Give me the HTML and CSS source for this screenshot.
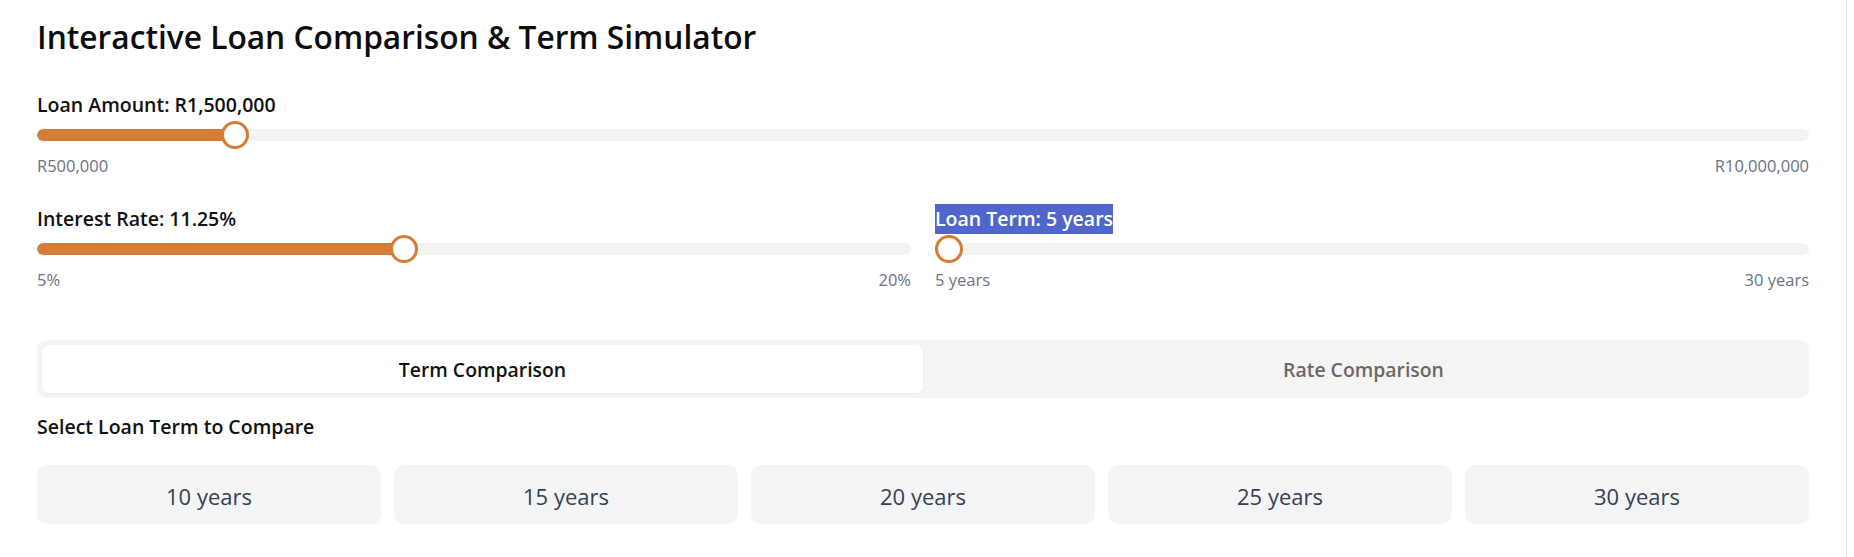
FILE: index.html
```html
<!DOCTYPE html>
<html lang="en">
<head>
<meta charset="utf-8">
<title>Interactive Loan Comparison &amp; Term Simulator</title>
<link rel="stylesheet" href="styles.css">
</head>
<body>
<div class="page">
  <h1 class="title">Interactive Loan Comparison &amp; Term Simulator</h1>

  <div class="group">
    <div class="label">Loan Amount: R1,500,000</div>
    <div class="slider" style="--p:0.10526">
      <div class="track"><div class="fill"></div></div>
      <div class="thumb"></div>
    </div>
    <div class="range-labels"><span>R500,000</span><span>R10,000,000</span></div>
  </div>

  <div class="row">
    <div class="group">
      <div class="label">Interest Rate: 11.25%</div>
      <div class="slider" style="--p:0.41667">
        <div class="track"><div class="fill"></div></div>
        <div class="thumb"></div>
      </div>
      <div class="range-labels"><span>5%</span><span>20%</span></div>
    </div>
    <div class="group">
      <div class="label"><span class="selected">Loan Term: 5 years</span></div>
      <div class="slider" style="--p:0">
        <div class="track"><div class="fill"></div></div>
        <div class="thumb"></div>
      </div>
      <div class="range-labels"><span>5 years</span><span>30 years</span></div>
    </div>
  </div>

  <div class="tabs">
    <div class="tab active">Term Comparison</div>
    <div class="tab">Rate Comparison</div>
  </div>

  <div class="label select-label">Select Loan Term to Compare</div>

  <div class="terms">
    <div class="term">10 years</div>
    <div class="term">15 years</div>
    <div class="term">20 years</div>
    <div class="term">25 years</div>
    <div class="term">30 years</div>
  </div>
</div>
</body>
</html>
```

FILE: styles.css
```css
* { box-sizing: border-box; }

html, body {
  margin: 0;
  padding: 0;
  background: #ffffff;
}

body {
  font-family: "Open Sans", "Noto Sans", "Liberation Sans", sans-serif;
  color: #111111;
}

.page {
  width: 1847px;
  min-height: 557px;
  padding: 17px 37px 0 37px;
  border-right: 1px solid #e4e4e4;
}

.title {
  margin: 0;
  font-size: 31.7px;
  line-height: 40px;
  font-weight: 600;
  color: #0d0d0d;
}

.group {
  display: flex;
  flex-direction: column;
}

.page > .group {
  margin-top: 33px;
}

.label {
  font-size: 19.5px;
  line-height: 30px;
  font-weight: 600;
  color: #111111;
}

.selected {
  display: inline-block;
  background: #5066cc;
  color: #ffffff;
}

.slider {
  position: relative;
  height: 30px;
  margin-top: 0;
  display: flex;
  align-items: center;
}

.track {
  width: 100%;
  height: 12px;
  border-radius: 6px;
  background: #f3f3f1;
  overflow: hidden;
}

.fill {
  height: 100%;
  width: calc(14px + var(--p) * (100% - 28px));
  background: #d57c39;
  border-radius: 6px 0 0 6px;
}

.thumb {
  position: absolute;
  top: 1px;
  left: calc(var(--p) * (100% - 28px));
  width: 28px;
  height: 28px;
  border-radius: 50%;
  background: #ffffff;
  border: 3px solid #d57c39;
}

.range-labels {
  margin-top: 6px;
  display: flex;
  justify-content: space-between;
  font-size: 16.5px;
  line-height: 20px;
  color: #6b7280;
}

.row {
  margin-top: 28px;
  display: grid;
  grid-template-columns: 1fr 1fr;
  column-gap: 24px;
}

.tabs {
  margin-top: 50px;
  display: grid;
  grid-template-columns: 1fr 1fr;
  padding: 5px;
  height: 58px;
  background: #f4f4f2;
  border-radius: 10px;
}

.tab {
  display: flex;
  align-items: center;
  justify-content: center;
  font-size: 19.4px;
  font-weight: 600;
  color: #6b6865;
  border-radius: 7px;
}

.tab.active {
  background: #ffffff;
  color: #111111;
  box-shadow: 0 1px 2px rgba(0, 0, 0, 0.06);
}

.select-label {
  margin-top: 14px;
}

.terms {
  margin-top: 23px;
  display: grid;
  grid-template-columns: repeat(5, 1fr);
  column-gap: 13px;
}

.term {
  height: 59px;
  display: flex;
  align-items: center;
  justify-content: center;
  padding-top: 2px;
  background: #f3f4f6;
  border-radius: 10px;
  font-size: 22px;
  color: #374151;
}
```
